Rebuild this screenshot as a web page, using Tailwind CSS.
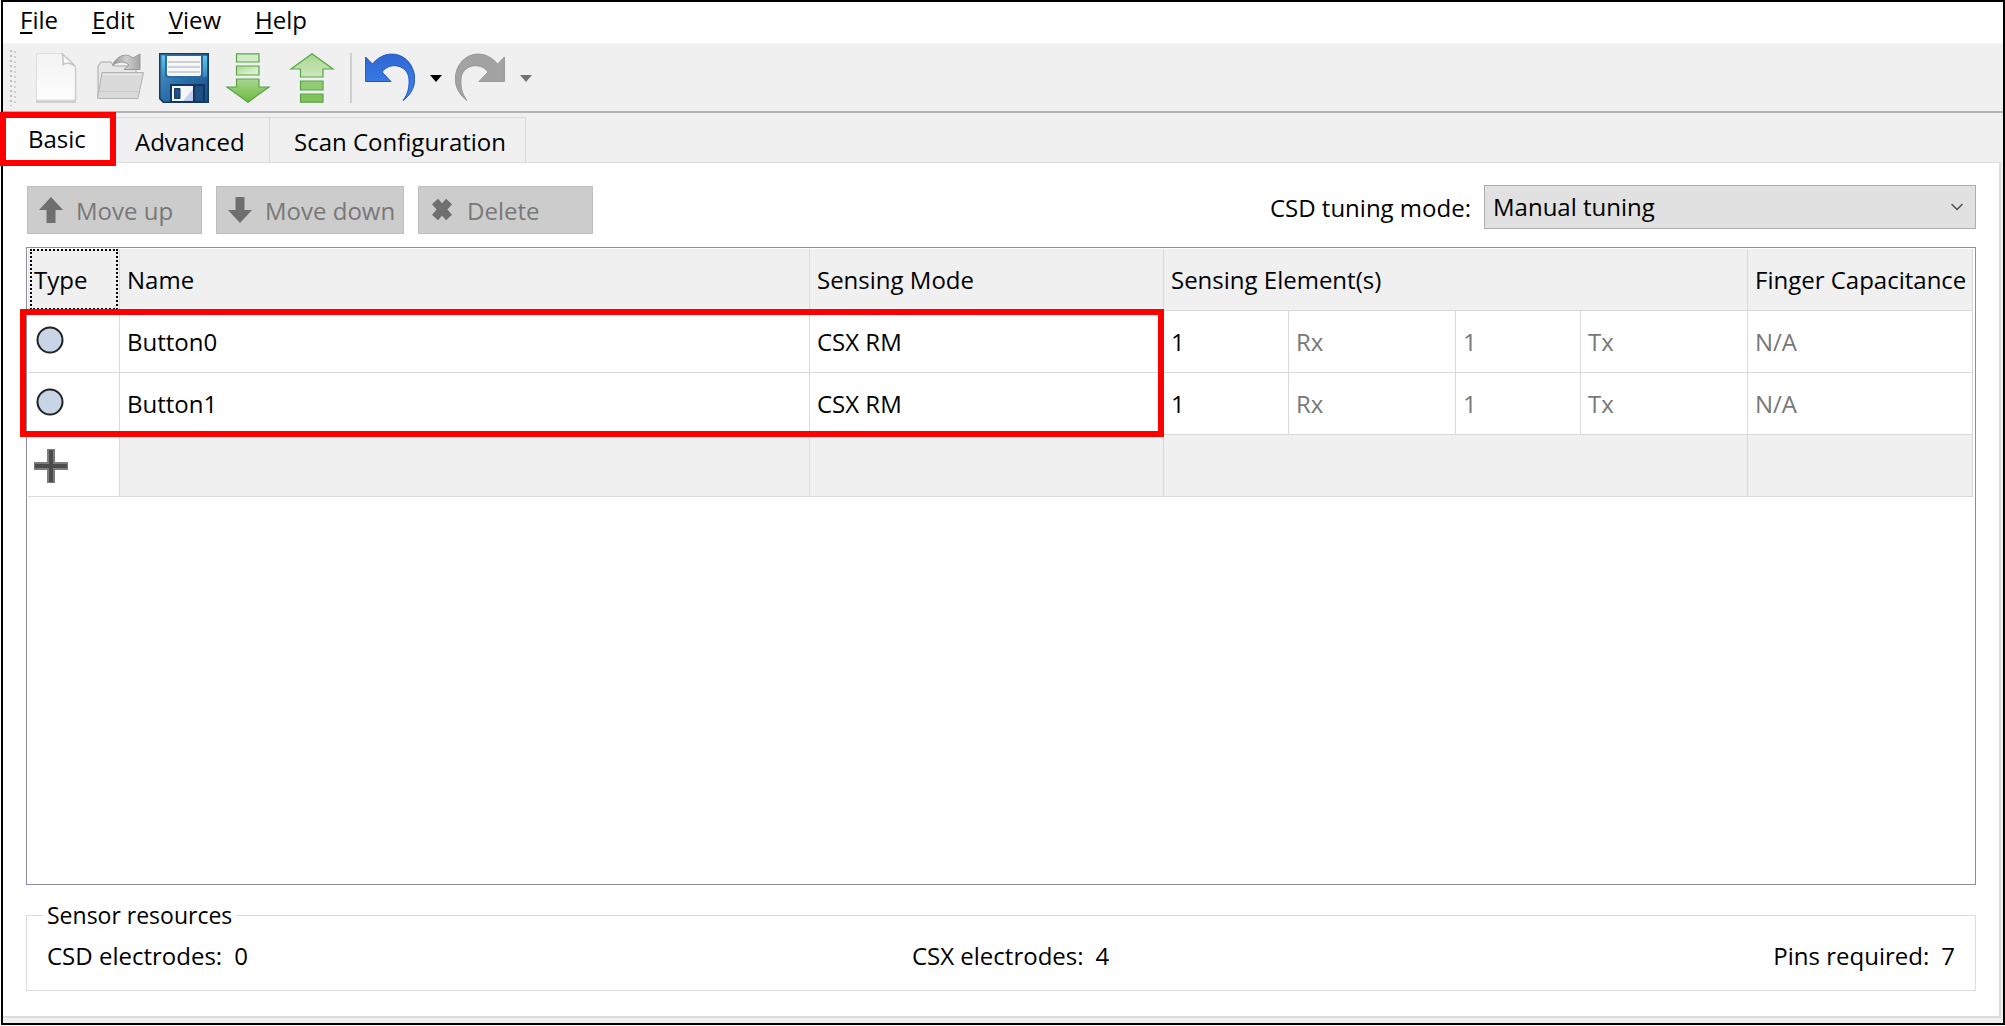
<!DOCTYPE html>
<html lang="en">
<head>
<meta charset="utf-8">
<title>CAPSENSE Configurator</title>
<script src="https://cdn.jsdelivr.net/npm/@tailwindcss/browser@4"></script>
</head>
<body class="min-h-screen bg-white pl-px pb-px flex flex-col font-['Open_Sans','Noto_Sans',sans-serif] text-2xl leading-8 text-black">
<div class="flex-1 flex flex-col border-2 border-black">

  <nav class="h-[42px] flex items-start gap-[34px] pl-[17px] border-b border-[#f5f5f5]">
    <a href="#" class="block pt-0.5"><u class="underline decoration-2 underline-offset-3">F</u>ile</a>
    <a href="#" class="block pt-0.5"><u class="underline decoration-2 underline-offset-3">E</u>dit</a>
    <a href="#" class="block pt-0.5"><u class="underline decoration-2 underline-offset-3">V</u>iew</a>
    <a href="#" class="block pt-0.5"><u class="underline decoration-2 underline-offset-3">H</u>elp</a>
  </nav>

  <div class="h-[69px] flex items-center bg-[#f0f0f0] border-b-2 border-[#b4b4b4] pl-[6px] pt-px">
    <svg class="w-2 h-14 mr-[14px]" viewBox="0 0 8 56" aria-hidden="true">
      <path d="M2 0V56" stroke="#bdbdbd" stroke-width="2" stroke-dasharray="2 3"/>
      <path d="M6 1V56" stroke="#d0d0d0" stroke-width="2" stroke-dasharray="2 3"/>
    </svg>
    <div class="flex items-center gap-[14px]">
      <button aria-label="New">
        <svg class="block w-[50px] h-[50px]" viewBox="0 0 50 50">
          <defs><linearGradient id="doc" x2="0" y2="1"><stop offset="0" stop-color="#f3f3f3"/><stop offset="1" stop-color="#fdfdfd"/></linearGradient></defs>
          <path d="M5 46h40v4H5z" fill="#cfcfcf"/>
          <path d="M5.500 .5H31L44.500 13V47H5.500z" fill="url(#doc)" stroke="#dedede"/>
          <path d="M31 .5c2 4 1 8 1 11 4-2 9-1 12.500 2z" fill="#fff" stroke="#c6c6c6" stroke-width="1.500"/>
          <path d="M44.500 14v34" stroke="#cdcdcd" stroke-width="1.500"/>
        </svg>
      </button>
      <button aria-label="Open">
        <svg class="block w-[50px] h-[50px]" viewBox="0 0 50 50">
          <defs><linearGradient id="arr" x2="1"><stop offset="0" stop-color="#8f8f8f"/><stop offset=".5" stop-color="#cfcfcf"/><stop offset="1" stop-color="#a4a4a4"/></linearGradient></defs>
          <path d="M3 44V13l3-4h10l3 4h22v31z" fill="#e6e6e6" stroke="#a8a8a8"/>
          <path d="M17.500 12.500C21 3 31 -1 38 5L45 1V16.500H29L34 12C29 7 22 9 17.500 12.500z" fill="url(#arr)" stroke="#999"/>
          <path d="M7 19.500H48.500L43 45.500H2.500z" fill="#dadada" stroke="#b2b2b2"/>
          <path d="M5 38.500H43" stroke="#c8c8c8"/>
          <path d="M8 21.500H46" stroke="#ebebeb"/>
        </svg>
      </button>
      <button aria-label="Save">
        <svg class="block w-[50px] h-[50px]" viewBox="0 0 50 50">
          <defs><linearGradient id="disk" x2="1" y2="1"><stop offset="0" stop-color="#4f9bc9"/><stop offset=".5" stop-color="#2b70aa"/><stop offset="1" stop-color="#174f86"/></linearGradient>
          <linearGradient id="edge" x2="0" y2="1"><stop offset="0" stop-color="#59c8ee"/><stop offset="1" stop-color="#3a86ba"/></linearGradient></defs>
          <path d="M0 0H50V50H4L0 46z" fill="#143a62"/>
          <path d="M1.500 1.500H48.500V48.500H5L1.500 45z" fill="url(#disk)"/>
          <path d="M3 3H7V22H3zM44 3H48V24H44z" fill="url(#edge)"/>
          <path d="M6 2H44V22Q44 25 41 25H9Q6 25 6 22z" fill="#2a6ca2"/>
          <path d="M8 3H42V21Q42 23 40 23H10Q8 23 8 21z" fill="#f5f7f8"/>
          <path d="M9 9H41M9 14H41M9 19H41" stroke="#cdd2d5" stroke-width="2"/>
          <path d="M11 31H46V49H11z" fill="#123562"/>
          <path d="M13 33H34V48H13z" fill="#f4f6fb"/>
          <path d="M24 48L34 36V48z" fill="#c2cfec"/>
          <path d="M15.500 35.500H21V45.500H15.500z" fill="#1d4f86" stroke="#103a68"/>
          <path d="M36 33H44V48H36z" fill="#1c5085"/>
        </svg>
      </button>
      <button aria-label="Import">
        <svg class="block w-[50px] h-[50px]" viewBox="0 0 50 50">
          <defs><linearGradient id="gd" x2="0" y2="1"><stop offset="0" stop-color="#a9d78d"/><stop offset="1" stop-color="#6db741"/></linearGradient>
          <linearGradient id="gl" x2="1" y2="1"><stop offset="0" stop-color="#a9d78d"/><stop offset=".7" stop-color="#d9efcd"/></linearGradient></defs>
          <g stroke="#58a548" stroke-width="1.200">
            <path d="M13.500 .8H36V9H13.500z" fill="#d3ebc6"/>
            <path d="M13.500 13H36V22H13.500z" fill="url(#gl)"/>
            <path d="M13.500 26H36V34H46L25 49.200L4 34H13.500z" fill="url(#gd)"/>
          </g>
        </svg>
      </button>
      <button aria-label="Export">
        <svg class="block w-[50px] h-[50px]" viewBox="0 0 50 50">
          <defs><linearGradient id="gu" x2="0" y2="1"><stop offset="0" stop-color="#a9d78d"/><stop offset="1" stop-color="#cde8bd"/></linearGradient></defs>
          <g stroke="#58a548" stroke-width="1.200">
            <path d="M25 .8L46 16H36V24H13.500V16H4z" fill="url(#gu)"/>
            <path d="M13.500 28H36V37H13.500z" fill="#93cb73"/>
            <path d="M13.500 41H36V49.200H13.500z" fill="#80c35b"/>
          </g>
        </svg>
      </button>
    </div>
    <div class="w-0.5 h-[50px] bg-[#cfcfcf] ml-[13px] mr-[13px]"></div>
    <button aria-label="Undo">
      <svg class="block w-[50px] h-[50px]" viewBox="0 0 50 50">
        <defs><linearGradient id="un" x2="0" y2="1"><stop offset="0" stop-color="#2f66d2"/><stop offset="1" stop-color="#3f86f2"/></linearGradient></defs>
        <path d="M.6 4V28.500H26L17 19C25 8 43 12 44 26C44.500 34 43 41 38 47.500C47 41 50.500 32 49.500 23C47 1 22-7 7.500 11z" fill="url(#un)" stroke="#2555c4"/>
      </svg>
    </button>
    <button aria-label="Undo history" class="w-10 pl-0.5 flex justify-center"><svg class="w-3 h-[7px]" viewBox="0 0 12 7"><path d="M0 0H12L6 7z" fill="#000"/></svg></button>
    <button aria-label="Redo" disabled>
      <svg class="block w-[50px] h-[50px]" viewBox="0 0 50 50">
        <path transform="matrix(-1 0 0 1 50 0)" d="M.6 4V28.500H26L17 19C25 8 43 12 44 26C44.500 34 43 41 38 47.500C47 41 50.500 32 49.500 23C47 1 22-7 7.500 11z" fill="#a3a3a3" stroke="#999"/>
      </svg>
    </button>
    <button aria-label="Redo history" disabled class="w-10 pl-0.5 flex justify-center"><svg class="w-3 h-[7px]" viewBox="0 0 12 7"><path d="M0 0H12L6 7z" fill="#6e7478"/></svg></button>
  </div>

  <div class="h-[49px] flex items-end bg-[#f0f0f0] relative" role="tablist">
    <button role="tab" aria-selected="true" class="absolute -left-[3px] -top-px w-[116px] h-[54px] border-6 border-[#f00] bg-white pl-[22px] text-left z-10">Basic</button>
    <button role="tab" aria-selected="false" class="ml-[113px] w-[154px] h-[45px] border-t border-r border-[#d9d9d9] pl-[19px] pt-1 text-left">Advanced</button>
    <button role="tab" aria-selected="false" class="w-[256px] h-[45px] border-t border-r border-[#d9d9d9] pl-6 pt-1 text-left whitespace-nowrap">Scan Configuration</button>
  </div>

  <div class="flex-1 flex bg-[#f0f0f0] pr-0.5 pb-[5px]">
  <main class="flex-1 flex flex-col border-t border-r-2 border-b-2 border-[#dcdcdc] bg-white pl-[23px] pr-[23px] pt-[22px] pb-[25px]">
    <div class="flex items-start">
      <div class="flex gap-[14px] pt-px pl-px text-[#787878]">
        <button disabled class="h-12 w-[175px] bg-[#ccc] border border-[#bfbfbf] flex items-center gap-3 pl-[10px] pt-0.5 whitespace-nowrap">
          <svg class="w-[26px] h-[26px] mb-0.5" viewBox="0 0 26 26"><path d="M13 0L25 13H17.500V26H8.500V13H1z" fill="#6f6f6f"/></svg>Move up</button>
        <button disabled class="h-12 w-[188px] bg-[#ccc] border border-[#bfbfbf] flex items-center gap-3 pl-[10px] pt-0.5 whitespace-nowrap">
          <svg class="w-[26px] h-[26px] mb-0.5" viewBox="0 0 26 26"><path d="M13 26L25 13H17.500V0H8.500V13H1z" fill="#6f6f6f"/></svg>Move down</button>
        <button disabled class="h-12 w-[175px] bg-[#ccc] border border-[#bfbfbf] flex items-center gap-3 pl-[10px] pt-0.5 whitespace-nowrap">
          <svg class="w-[26px] h-[26px] mb-0.5" viewBox="0 0 26 26"><path d="M6 4.500L20 20.500M20 4.500L6 20.500" stroke="#6f6f6f" stroke-width="8"/></svg>Delete</button>
      </div>
      <div class="ml-auto flex items-center gap-[13px]">
        <label for="mode" class="pt-px">CSD tuning mode:</label>
        <div class="relative">
          <select id="mode" class="appearance-none block w-[492px] h-11 bg-[#e1e1e1] border border-[#adadad] pl-2">
            <option>Manual tuning</option>
          </select>
          <svg class="absolute right-3 top-4 w-[14px] h-3 pointer-events-none" viewBox="0 0 14 12"><path d="M1.500 3L7 8.500L12.500 3" fill="none" stroke="#505050" stroke-width="1.500"/></svg>
        </div>
      </div>
    </div>

    <div class="relative flex-1 mt-[13px] border border-[#8b8f9b] pl-px pt-px pr-0.5">
      <table class="w-full table-fixed border-separate border-spacing-0 text-left [&_td]:border-r [&_td]:border-b [&_th]:border-r [&_th]:border-b [&_td]:border-[#d9d9d9] [&_th]:border-[#d9d9d9] [&_th]:font-normal [&_td]:pl-[7px] [&_th]:pl-[7px] [&_td:first-child]:pl-1.5 [&_th:first-child]:pl-1.5 [&_td]:h-[62px] whitespace-nowrap">
        <colgroup><col class="w-[92px]"><col><col class="w-[354px]"><col class="w-[125px]"><col class="w-[167px]"><col class="w-[125px]"><col class="w-[167px]"><col class="w-[225px]"></colgroup>
        <thead>
          <tr class="bg-[#f0f0f0] h-[62px]">
            <th class="relative">Type<span class="absolute left-0.5 right-px top-0 bottom-0 border-2 border-dotted border-black"></span></th>
            <th>Name</th><th>Sensing Mode</th><th colspan="4">Sensing Element(s)</th><th>Finger Capacitance</th>
          </tr>
        </thead>
        <tbody class="[&_td:nth-child(n+5)]:text-[#787878]">
          <tr><td><svg class="ml-0.5 mb-1 w-7 h-7" viewBox="0 0 28 28"><circle cx="14" cy="14" r="12.500" fill="#c8d5e6" stroke="#222" stroke-width="2"/></svg></td><td>Button0</td><td>CSX RM</td><td>1</td><td>Rx</td><td>1</td><td>Tx</td><td>N/A</td></tr>
          <tr><td><svg class="ml-0.5 mb-1 w-7 h-7" viewBox="0 0 28 28"><circle cx="14" cy="14" r="12.500" fill="#c8d5e6" stroke="#222" stroke-width="2"/></svg></td><td>Button1</td><td>CSX RM</td><td>1</td><td>Rx</td><td>1</td><td>Tx</td><td>N/A</td></tr>
          <tr class="bg-[#f0f0f0]"><td class="bg-white"><button aria-label="Add" class="block"><svg class="block w-[34px] h-[34px]" viewBox="0 0 34 34"><path d="M13 0H21V13H34V21H21V34H13V21H0V13H13z" fill="#7d7d7d"/><path d="M15 1H19V15H33V19H19V33H15V19H1V15H15z" fill="#4c4c4c"/></svg></button></td><td></td><td></td><td colspan="4"></td><td></td></tr>
        </tbody>
      </table>
      <div class="absolute -left-[7px] right-[811px] top-[61px] h-32 border-6 border-[#f00] pointer-events-none"></div>
    </div>

    <fieldset class="mt-[14px] border border-[#dcdcdc] px-5 pb-[18px] min-w-0">
      <legend class="-ml-1 px-1 text-[23px]">Sensor resources</legend>
      <div class="flex justify-between pt-[9px]">
        <div class="flex gap-3"><span>CSD electrodes:</span><span>0</span></div>
        <div class="flex gap-3"><span>CSX electrodes:</span><span>4</span></div>
        <div class="flex gap-3"><span>Pins required:</span><span>7</span></div>
      </div>
    </fieldset>
  </main>
  </div>
</div>
</body>
</html>
